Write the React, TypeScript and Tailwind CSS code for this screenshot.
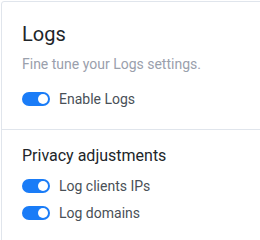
import React from "react";

function Toggle() {
  return (
    <span className="relative inline-flex h-[14px] w-[28px] shrink-0 items-center rounded-full bg-[#1a7cf7]">
      <span className="absolute right-[2px] h-[10px] w-[10px] rounded-full bg-white" />
    </span>
  );
}

function SwitchRow({ label }: { label: string }) {
  return (
    <label className="flex h-[20px] items-center gap-[9px] text-[14px] text-[#495057]">
      <Toggle />
      <span>{label}</span>
    </label>
  );
}

export default function App() {
  return (
    <div className="h-[240px] w-[260px] overflow-hidden bg-white pl-px pt-px font-['Roboto',sans-serif]">
      <div className="h-[300px] w-[300px] rounded-[3px] border border-[#e0e5ec] bg-white">
        {/* Header */}
        <div className="px-[20px] pt-[19px] pb-[20px]">
          <h2 className="text-[20px] leading-[26px] text-[#212529]">Logs</h2>
          <p className="mt-[7px] text-[14px] leading-[20px] text-[#9aa0ac]">
            Fine tune your Logs settings.
          </p>
          <div className="mt-[15px]">
            <SwitchRow label="Enable Logs" />
          </div>
        </div>

        {/* Privacy */}
        <div className="border-t border-[#e0e5ec] px-[20px] pt-[15px]">
          <h3 className="text-[16px] leading-[22px] text-[#212529]">Privacy adjustments</h3>
          <div className="mt-[9px] flex flex-col gap-[7px]">
            <SwitchRow label="Log clients IPs" />
            <SwitchRow label="Log domains" />
          </div>
        </div>
      </div>
    </div>
  );
}
